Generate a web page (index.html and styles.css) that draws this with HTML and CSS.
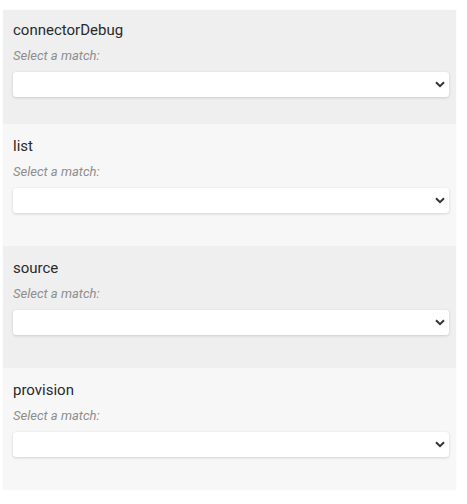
FILE: index.html
```html
<!DOCTYPE html>
<html>
<head>
<meta charset="utf-8">
<link rel="stylesheet" href="styles.css">
</head>
<body>
<div class="panel">
  <div class="field field-first odd">
    <div class="name">connectorDebug</div>
    <div class="hint">Select a match:</div>
    <div class="select-wrap">
      <select class="select"><option></option></select>
      <svg class="chev" width="10" height="7" viewBox="0 0 10 7"><path d="M1 1.2 L5 5.2 L9 1.2" fill="none" stroke="#333" stroke-width="2"/></svg>
    </div>
  </div>
  <div class="field even">
    <div class="name">list</div>
    <div class="hint">Select a match:</div>
    <div class="select-wrap">
      <select class="select"><option></option></select>
      <svg class="chev" width="10" height="7" viewBox="0 0 10 7"><path d="M1 1.2 L5 5.2 L9 1.2" fill="none" stroke="#333" stroke-width="2"/></svg>
    </div>
  </div>
  <div class="field odd">
    <div class="name">source</div>
    <div class="hint">Select a match:</div>
    <div class="select-wrap">
      <select class="select"><option></option></select>
      <svg class="chev" width="10" height="7" viewBox="0 0 10 7"><path d="M1 1.2 L5 5.2 L9 1.2" fill="none" stroke="#333" stroke-width="2"/></svg>
    </div>
  </div>
  <div class="field even">
    <div class="name">provision</div>
    <div class="hint">Select a match:</div>
    <div class="select-wrap">
      <select class="select"><option></option></select>
      <svg class="chev" width="10" height="7" viewBox="0 0 10 7"><path d="M1 1.2 L5 5.2 L9 1.2" fill="none" stroke="#333" stroke-width="2"/></svg>
    </div>
  </div>
</div>
</body>
</html>
```
FILE: styles.css
```css
html, body {
  margin: 0;
  padding: 0;
  background: #ffffff;
}
body {
  font-family: Roboto, "Liberation Sans", sans-serif;
  padding: 10px 11px 0 3px;
}
.panel {
  display: flex;
  flex-direction: column;
  box-shadow: 0 0 2px rgba(0,0,0,0.04);
}
.field {
  display: flex;
  flex-direction: column;
  padding: 12px 7px 33px 10px;
}
.field-first {
  padding-top: 10px;
  padding-bottom: 27px;
}
.odd { background: #efefef; }
.even { background: #f7f7f7; }
.name {
  font-size: 15px;
  line-height: 20px;
  color: #2a2a2a;
}
.hint {
  margin-top: 8px;
  font-size: 13px;
  line-height: 16px;
  font-style: italic;
  color: #8e8e8e;
}
.select-wrap {
  position: relative;
  margin-top: 8px;
}
.select {
  display: block;
  width: 100%;
  height: 25px;
  margin: 0;
  border: none;
  border-radius: 3px;
  background: #ffffff;
  box-shadow: 0 1px 3px rgba(0,0,0,0.14), 0 0 1px rgba(0,0,0,0.08);
  -webkit-appearance: none;
  appearance: none;
  font-family: inherit;
}
.chev {
  position: absolute;
  right: 4px;
  top: 9px;
  pointer-events: none;
}
```
